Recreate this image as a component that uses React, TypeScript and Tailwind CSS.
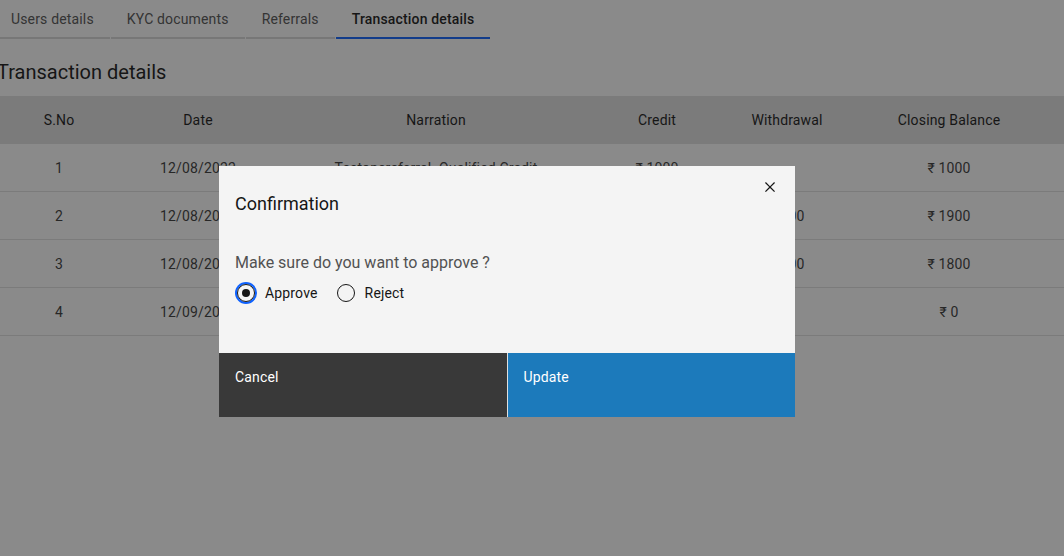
const tabs = ["Users details", "KYC documents", "Referrals", "Transaction details"]

const rows = [
  { sno: 1, date: "12/08/2022", narration: "Testonereferral- Qualified Credit", credit: "₹ 1000", withdrawal: "", balance: "₹ 1000" },
  { sno: 2, date: "12/08/2022", narration: "Testtworeferral- Qualified Credit", credit: "₹ 1000", withdrawal: "₹ 100", balance: "₹ 1900" },
  { sno: 3, date: "12/08/2022", narration: "Withdrawal request", credit: "", withdrawal: "₹ 100", balance: "₹ 1800" },
  { sno: 4, date: "12/09/2022", narration: "Withdrawal request", credit: "", withdrawal: "", balance: "₹ 0" },
]

const cols = "grid grid-cols-[128px_150px_326px_116px_144px_180px_1fr]"

const CloseIcon = () => (
  <svg width="20" height="20" viewBox="0 0 32 32" fill="#161616">
    <polygon points="24 9.4 22.6 8 16 14.6 9.4 8 8 9.4 14.6 16 8 22.6 9.4 24 16 17.4 22.6 24 24 22.6 17.4 16 24 9.4" />
  </svg>
)

const Radio = ({ label, checked }: { label: string; checked?: boolean }) => (
  <label className="flex items-center gap-[10px]">
    <span
      className={`w-[18px] h-[18px] rounded-full border border-[#161616] flex items-center justify-center ${
        checked ? "ring-2 ring-[#0f62fe] ring-offset-0" : ""
      }`}
    >
      {checked && <span className="w-2 h-2 rounded-full bg-[#161616]" />}
    </span>
    <span className="text-sm tracking-[0.16px] text-[#161616]">{label}</span>
  </label>
)

const App = () => {
  return (
    <div className="relative w-[1064px] h-[556px] overflow-hidden bg-white" style={{ fontFamily: "Roboto, 'Noto Sans', sans-serif" }}>
      <div className="ml-[-5px]">
        <div className="flex gap-px h-[39px]">
          {tabs.map((t, i) => (
            <div
              key={t}
              className={`px-4 flex items-center text-sm tracking-[0.16px] border-b-2 ${
                i === 3 ? "border-[#0f62fe] text-[#161616] font-medium" : "border-[#d8d8d8] text-[#525252]"
              }`}
            >
              {t}
            </div>
          ))}
        </div>
        <h2 className="mt-[21px] ml-[2px] text-[20px] leading-6 text-[#161616]">Transaction details</h2>
        <div className="mt-[12px]">
          <div className={`${cols} h-12 items-center bg-[#e0e0e0] text-sm tracking-[0.16px] text-[#161616] text-center`}>
            <div>S.No</div>
            <div>Date</div>
            <div>Narration</div>
            <div>Credit</div>
            <div>Withdrawal</div>
            <div>Closing Balance</div>
            <div />
          </div>
          {rows.map(r => (
            <div key={r.sno} className={`${cols} h-12 items-center border-b border-[#e0e0e0] text-sm tracking-[0.16px] text-[#393939] text-center`}>
              <div>{r.sno}</div>
              <div>{r.date}</div>
              <div>{r.narration}</div>
              <div>{r.credit}</div>
              <div>{r.withdrawal}</div>
              <div>{r.balance}</div>
              <div />
            </div>
          ))}
        </div>
      </div>

      <div className="fixed inset-0 bg-[rgba(22,22,22,0.5)] pt-[166px] pl-[219px]">
        <div className="relative w-[576px] h-[251px] bg-[#f4f4f4] flex flex-col">
          <div className="absolute top-[11px] right-[15px]">
            <CloseIcon />
          </div>
          <div className="px-4 pt-[26px]">
            <h3 className="text-[18px] leading-6 text-[#161616]">Confirmation</h3>
            <p className="mt-[35px] text-base leading-6 text-[#525252]">Make sure do you want to approve ?</p>
            <div className="mt-[6px] h-6 flex items-center gap-[19px] pl-[2px]">
              <Radio label="Approve" checked />
              <Radio label="Reject" />
            </div>
          </div>
          <div className="mt-auto flex h-16 gap-px bg-[#e0e0e0]">
            <button className="flex-1 bg-[#393939] text-white text-sm tracking-[0.16px] text-left px-4 pt-[15px] leading-[18px] self-stretch flex items-start">
              Cancel
            </button>
            <button className="flex-1 bg-[#1c7abb] text-white text-sm tracking-[0.16px] text-left px-4 pt-[15px] leading-[18px] self-stretch flex items-start">
              Update
            </button>
          </div>
        </div>
      </div>
    </div>
  )
}

export default App
